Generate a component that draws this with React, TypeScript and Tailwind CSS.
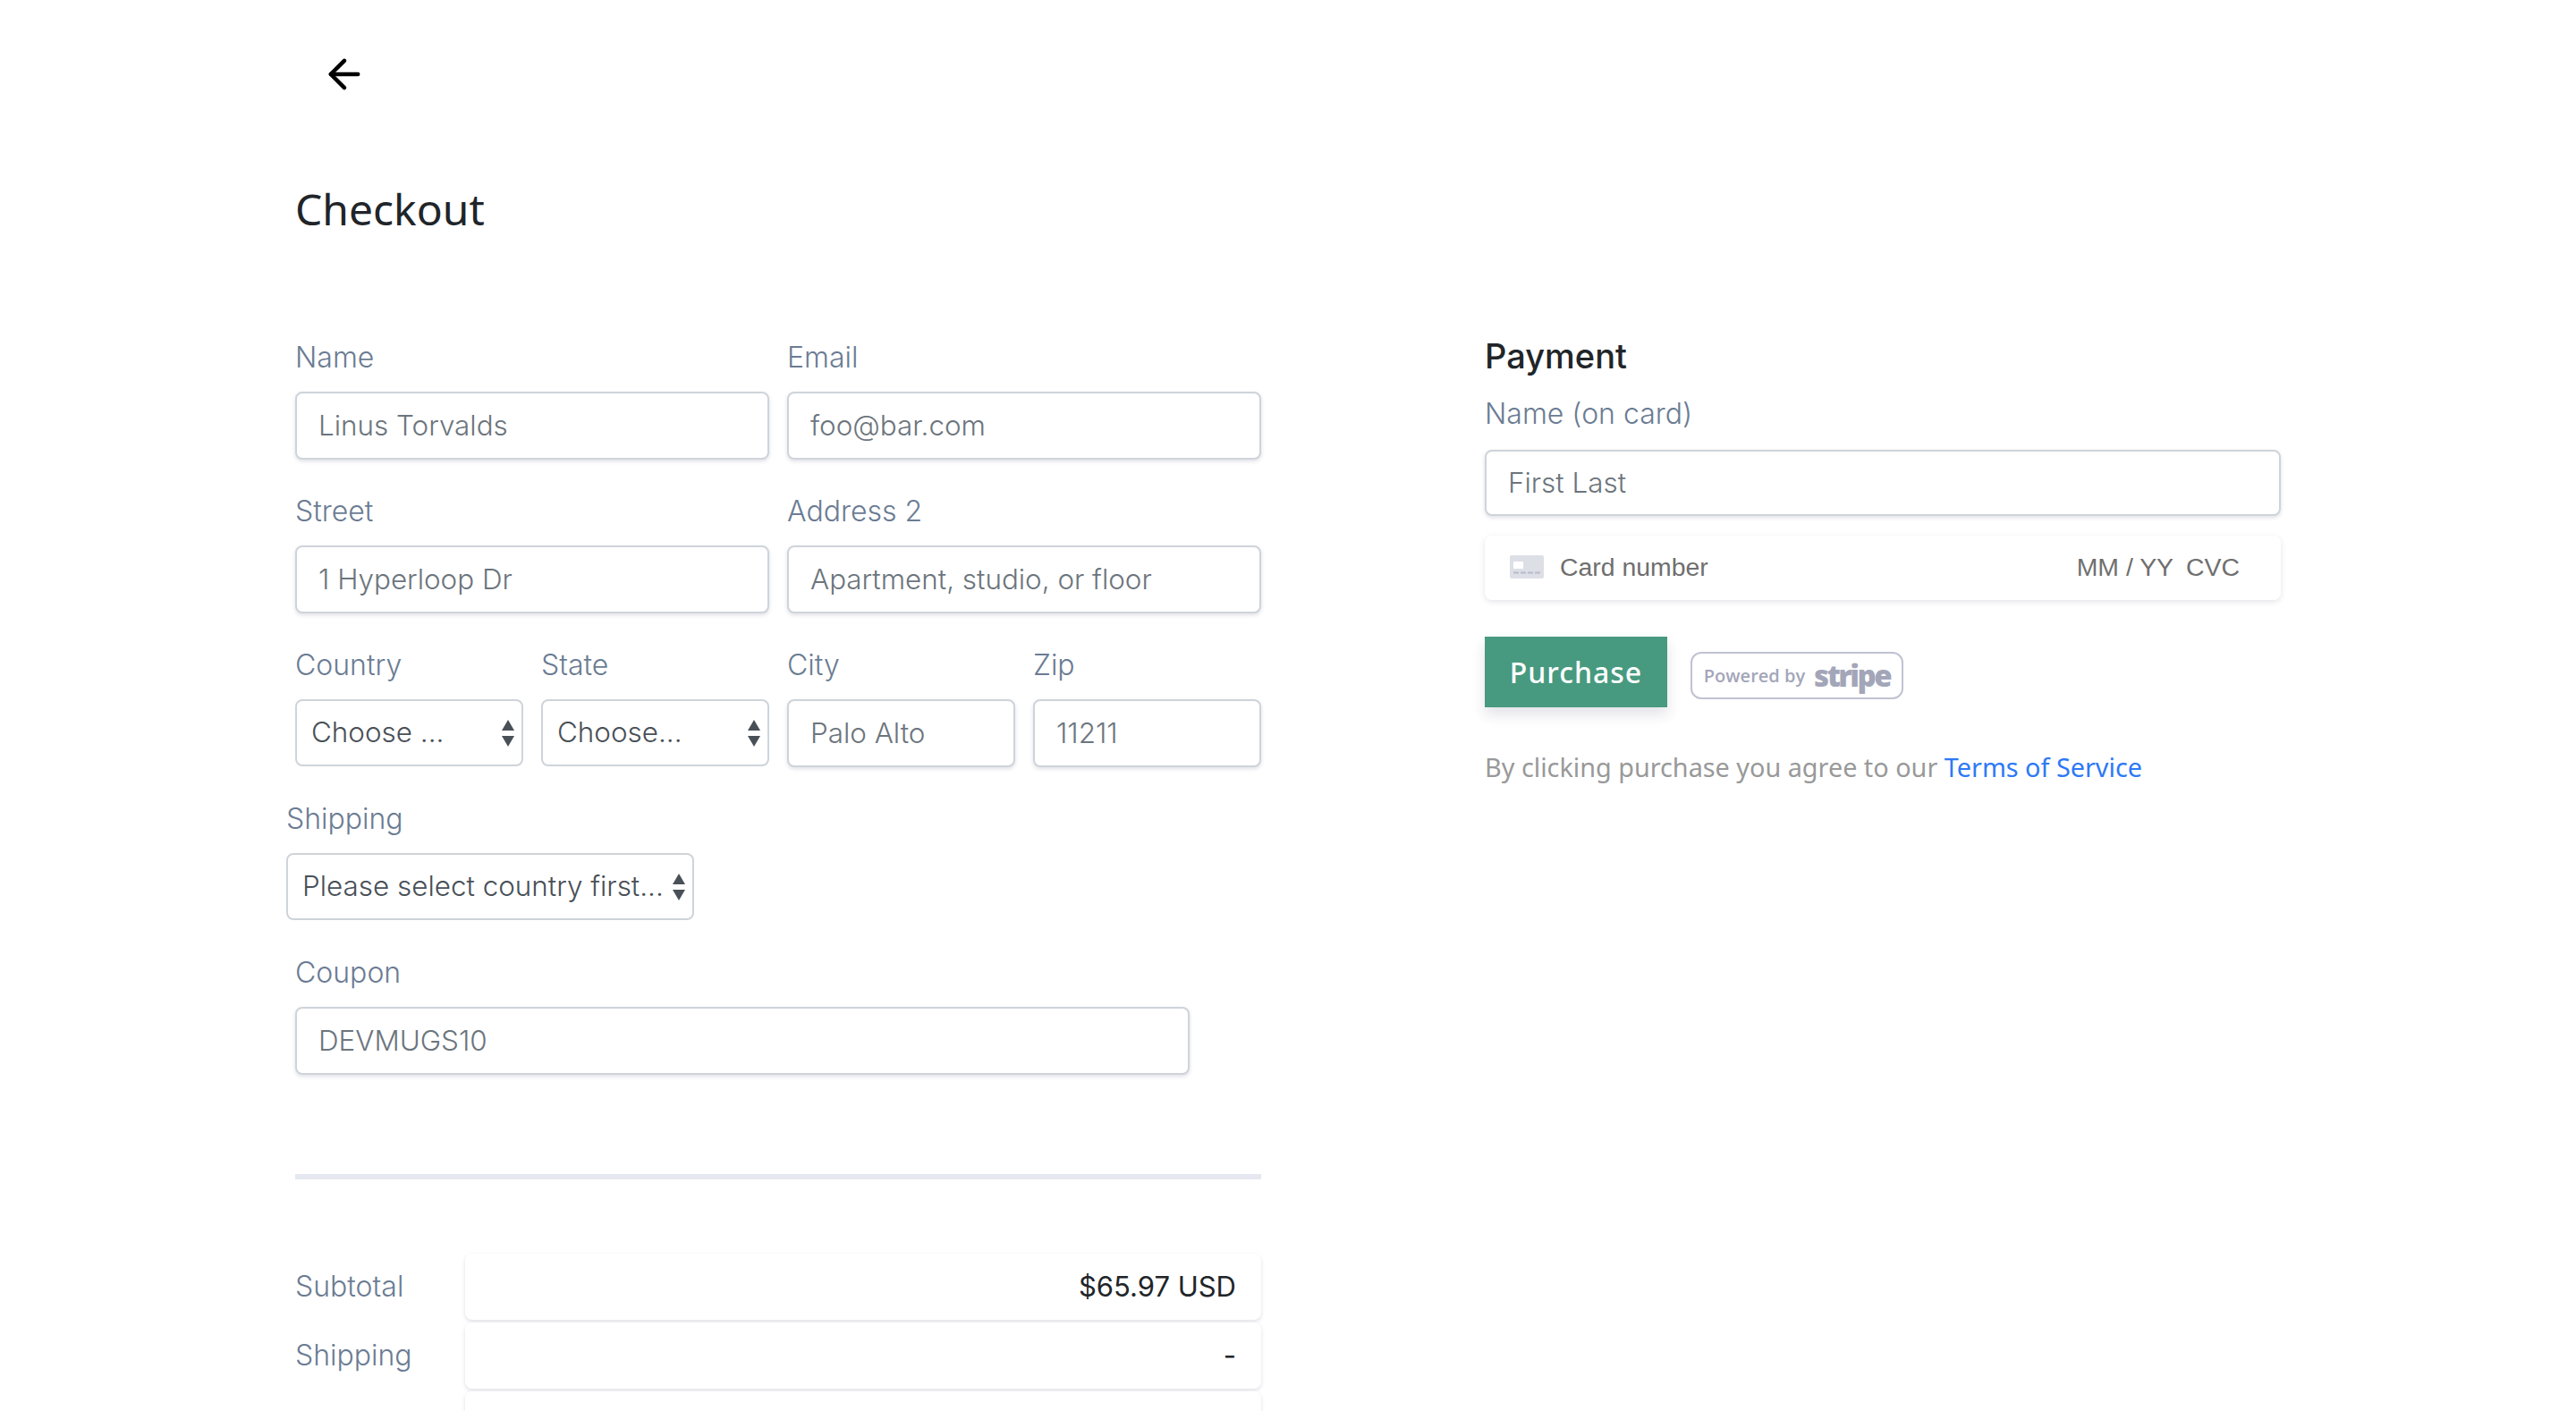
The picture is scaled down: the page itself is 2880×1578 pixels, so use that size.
import React from 'react';
import { ArrowLeft } from 'lucide-react';

const labelClass =
  "block h-[40px] mb-[18px] text-[32px] leading-[40px] font-light text-[#6b7c93] font-['Inter',sans-serif]";

const inputClass =
  "block w-full px-[24px] bg-white border-2 border-[#ced4da] rounded-[8px] shadow-[0_2px_4px_rgba(50,50,93,0.15)] text-[31.4px] font-light text-[#6c757d] outline-none font-['Inter',sans-serif]";

const Field = ({ label, value, className }: { label: string; value: string; className?: string }) => (
  <div className={className}>
    <label className={labelClass}>{label}</label>
    <input className={`${inputClass} h-[76px]`} defaultValue={value} readOnly />
  </div>
);

const SelectField = ({ label, value, className }: { label: string; value: string; className?: string }) => (
  <div className={className}>
    <label className={labelClass}>{label}</label>
    <div className="relative h-[75px]">
      <select
        className="block w-full h-full pl-[16px] pr-[24px] appearance-none bg-white border-2 border-[#ced4da] rounded-[8px] text-[31.4px] font-light text-[#495057] outline-none font-['Inter',sans-serif]"
        defaultValue={value}
      >
        <option>{value}</option>
      </select>
      {/* Up and down carets */}
      <svg className="absolute right-[9px] top-[23px]" width="16" height="30" viewBox="0 0 16 30">
        <path d="M8 0l7 12H1z" fill="#495057" />
        <path d="M1 18h14L8 30z" fill="#495057" />
      </svg>
    </div>
  </div>
);

const SummaryRow = ({ label, value }: { label?: string; value?: string }) => (
  <div className="flex items-center h-[74px]">
    <span className="w-[190px] text-[32px] font-light text-[#6b7c93] font-['Inter',sans-serif]">{label}</span>
    <div className="flex-1 h-full flex items-center justify-end px-[28px] bg-white rounded-[8px] shadow-[0_2px_4px_rgba(50,50,93,0.15)] text-[31px] text-[#212529] font-normal font-['Inter',sans-serif]">
      {value}
    </div>
  </div>
);

const CardIcon = () => (
  <svg width="38" height="26" viewBox="0 0 38 26" className="shrink-0">
    <rect width="38" height="26" rx="2" fill="#dcdfe6" />
    <rect x="4" y="7" width="11" height="8" fill="#ffffff" />
    <path d="M4 19.5h6M12 19.5h6M20 19.5h6M28 19.5h6" stroke="#b7bcc9" strokeWidth="2" />
  </svg>
);

const App = () => (
  <div className="relative flex h-[1578px] overflow-hidden bg-white">
    {/* Left column */}
    <div className="ml-[330px] w-[1080px] shrink-0">
      <div className="pt-[57px] pl-[29px]">
        <ArrowLeft size={52} strokeWidth={2.1} color="#000000" />
      </div>
      <h1 className="mt-[89px] h-[72px] text-[48px] leading-[72px] text-[#212529] font-['Noto_Sans',sans-serif]">
        Checkout
      </h1>
      <div className="mt-[110px] flex flex-col gap-[38px]">
        <div className="grid grid-cols-2 gap-x-[20px]">
          <Field label="Name" value="Linus Torvalds" />
          <Field label="Email" value="foo@bar.com" />
        </div>
        <div className="grid grid-cols-2 gap-x-[20px]">
          <Field label="Street" value="1 Hyperloop Dr" />
          <Field label="Address 2" value="Apartment, studio, or floor" />
        </div>
        <div className="grid grid-cols-4 gap-x-[20px]">
          <SelectField label="Country" value="Choose ..." />
          <SelectField label="State" value="Choose..." />
          <Field label="City" value="Palo Alto" />
          <Field label="Zip" value="11211" />
        </div>
      </div>
      <SelectField
        label="Shipping"
        value="Please select country first..."
        className="mt-[38px] ml-[-10px] w-[456px]"
      />
      <Field label="Coupon" value="DEVMUGS10" className="mt-[39px] w-[1000px]" />
      <div className="mt-[111px] h-[6px] bg-[#e6e8f1]" />
      <div className="mt-[83px] flex flex-col gap-[3px]">
        <SummaryRow label="Subtotal" value="$65.97 USD" />
        <SummaryRow label="Shipping" value="-" />
        <SummaryRow />
      </div>
    </div>

    {/* Right column */}
    <div className="ml-[250px] w-[890px] shrink-0 pt-[378px]">
      <h2 className="h-[40px] text-[38px] leading-[40px] font-medium text-[#212529] font-['Inter',sans-serif]">
        Payment
      </h2>
      <label className="block mt-[25px] h-[40px] text-[32px] leading-[40px] font-light text-[#6b7c93] font-['Inter',sans-serif]">
        Name (on card)
      </label>
      <input className={`${inputClass} h-[74px] mt-[20px]`} defaultValue="First Last" readOnly />
      <div className="mt-[22px] h-[72px] flex items-center pl-[28px] pr-[46px] pb-[2px] bg-white rounded-[8px] shadow-[0_2px_6px_rgba(50,50,93,0.13)] text-[28.4px] text-[#6f6f6f] font-['Liberation_Sans',sans-serif]">
        <CardIcon />
        <span className="ml-[18px]">Card number</span>
        <span className="ml-auto">MM / YY</span>
        <span className="ml-[14px]">CVC</span>
      </div>
      <div className="mt-[41px] flex items-start">
        <button className="w-[204px] h-[79px] bg-[#479a7f] text-white text-[32px] font-medium tracking-[1px] shadow-[0_8px_14px_rgba(50,50,93,0.14)] font-['Noto_Sans',sans-serif]">
          Purchase
        </button>
        <div className="ml-[26px] mt-[17px] w-[238px] h-[53px] flex items-center justify-center gap-[10px] border-2 border-[#c0c2d3] rounded-[12px] text-[#a3a6b9]">
          <span className="text-[20px] font-semibold font-['Open_Sans',sans-serif]">Powered by</span>
          <span className="text-[33px] leading-[34px] font-extrabold tracking-[-2.5px] font-['Open_Sans',sans-serif]">stripe</span>
        </div>
      </div>
      <p className="mt-[47px] h-[40px] text-[28.8px] leading-[40px] text-[#999999] font-['Noto_Sans',sans-serif]">
        By clicking purchase you agree to our <a className="text-[#2d79f6]">Terms of Service</a>
      </p>
    </div>
  </div>
);

export default App;
